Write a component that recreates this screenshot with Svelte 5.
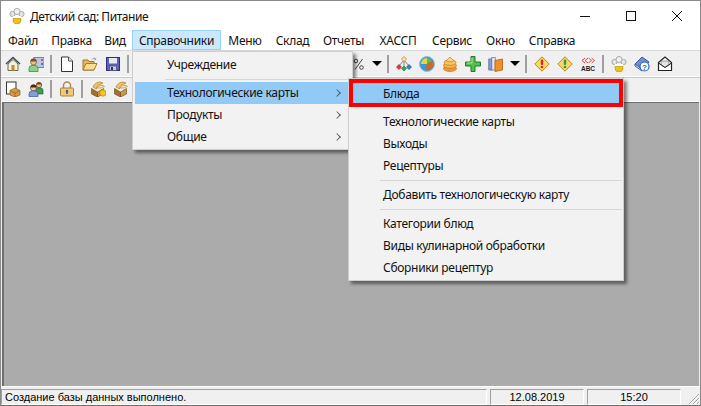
<script>
	const menus = [
		{ label: 'Файл', w: 44 },
		{ label: 'Правка', w: 53 },
		{ label: 'Вид', w: 34 },
		{ label: 'Справочники', w: 89, open: true },
		{ label: 'Меню', w: 48 },
		{ label: 'Склад', w: 47 },
		{ label: 'Отчеты', w: 55 },
		{ label: 'ХАССП', w: 54 },
		{ label: 'Сервис', w: 54 },
		{ label: 'Окно', w: 43 },
		{ label: 'Справка', w: 60 }
	];

	const row1 = [
		'home', 'staff', '|', 'doc', 'folder', 'floppy', '|', 'gap', 'percent', 'arrow', '|',
		'tree', 'pie', 'coins', 'plus', 'books', 'arrow', '|', 'warnred', 'warngreen', 'abc', '|',
		'chef', 'help', 'mail'
	];
	const row2 = ['docbox', 'people', '|', 'lock', '|', 'boxkey', 'boxopen'];

	const sub = [
		['Технологические карты', 'Выходы', 'Рецептуры'],
		['Добавить технологическую карту'],
		['Категории блюд', 'Виды кулинарной обработки', 'Сборники рецептур']
	];
</script>

{#snippet chefIcon()}
	<circle cx="3.5" cy="6" r="2.6" fill="#e6e6e6" stroke="#a8a8a8" />
	<circle cx="12.5" cy="6" r="2.6" fill="#e6e6e6" stroke="#a8a8a8" />
	<circle cx="8" cy="3.5" r="3" fill="#f2f2f2" stroke="#a8a8a8" />
	<path d="M4 8h8v4a4 4 0 0 1-8 0z" fill="#fff" />
	<path d="M4 10.5h8V12a4 4 0 0 1-8 0z" fill="#f4c20d" stroke="#b98a00" stroke-width=".6" />
{/snippet}

{#snippet icon(name)}
	<svg width="16" height="16" viewBox="0 0 16 16">
		{#if name === 'home'}
			<path d="M1 8 8 1.5 15 8" fill="none" stroke="#3a4a5a" stroke-width="1.5" />
			<path d="M3 8 8 3.5 13 8v6.5H3z" fill="#f7f1dc" stroke="#6b6b55" />
			<rect x="6.5" y="9" width="3" height="5.5" fill="#c98a2b" />
		{:else if name === 'staff'}
			<rect x="6" y="1.5" width="10" height="10" fill="#b9c8dc" stroke="#6f86a5" />
			<rect x="13" y="3" width="2" height="2" fill="#d44a9c" />
			<rect x="13" y="7" width="2" height="2" fill="#3e7fc4" />
			<circle cx="5.5" cy="6" r="3" fill="#eec08e" stroke="#7a5a2a" stroke-width=".7" />
			<path d="M2.5 5.5a3 3 0 0 1 6 0z" fill="#7a5020" />
			<path d="M1 15.5v-3a3 3 0 0 1 3-3h3a3 3 0 0 1 3 3v3z" fill="#8ed08a" stroke="#3f8a45" stroke-width=".8" />
		{:else if name === 'doc'}
			<path d="M2.5 1h7l4 4v10.5h-11z" fill="#fff" stroke="#333" />
			<path d="M9.5 1v4h4" fill="#dfe6f2" stroke="#555" />
		{:else if name === 'folder'}
			<path d="M1 14V4h5l1 1.5h5V14z" fill="#e8b95c" stroke="#9a7424" />
			<path d="M1 14l3-6.5h11L12 14z" fill="#fbdc92" stroke="#a67c28" />
			<path d="M10 3.5c1-1.5 2.5-1.5 3.5-.5" fill="none" stroke="#8a9bb0" />
			<path d="M12.5 1.5l2 1.5-2 1.5z" fill="#8a9bb0" />
		{:else if name === 'floppy'}
			<rect x="1.5" y="1.5" width="13" height="13" fill="#5f62b8" stroke="#2f3178" />
			<rect x="4" y="2" width="8" height="5.5" fill="#e6e8f4" />
			<rect x="4.5" y="10" width="7" height="4.5" fill="#c8cbd8" stroke="#3a3a6a" stroke-width=".6" />
			<rect x="6" y="11" width="2" height="3" fill="#333" />
		{:else if name === 'percent'}
			<path d="M12.5 3 5 13.5" stroke="#444" fill="none" />
			<circle cx="6" cy="5" r="1.8" fill="none" stroke="#444" />
			<circle cx="11.5" cy="11.5" r="1.8" fill="none" stroke="#444" />
		{:else if name === 'tree'}
			<path d="M8 4 3 10M8 4v6M8 4l5 6" stroke="#666" fill="none" stroke-width=".8" />
			<path d="M8 .5 10.5 3 8 5.5 5.5 3z" fill="#f7e3b0" stroke="#d9822b" stroke-width=".8" />
			<path d="M3 8.5 5.5 11 3 13.5.5 11z" fill="#e5383b" stroke="#8f1a1a" stroke-width=".6" />
			<path d="M8 10 10.5 12.5 8 15 5.500 12.5z" fill="#33a852" stroke="#1b6e30" stroke-width=".6" />
			<path d="M13 8.500 15.500 11 13 13.500 10.500 11z" fill="#2f7fd1" stroke="#174f8f" stroke-width=".6" />
		{:else if name === 'pie'}
			<circle cx="8" cy="8" r="7.500" fill="#3e96d2" stroke="#8cc4e6" />
			<path d="M8 8V2a6 6 0 0 0-6 6z" fill="#e6d63a" />
			<path d="M8 8V2a6 6 0 0 1 5.200 3z" fill="#5cb85c" />
			<path d="M8 8l5.200-3A6 6 0 0 1 13 12z" fill="#d8651f" />
			<path d="M8 8l5 4a6 6 0 0 1-6 2z" fill="#d8651f" />
		{:else if name === 'coins'}
			<ellipse cx="8" cy="12.500" rx="6.500" ry="3" fill="#ec9a3a" stroke="#c46f12" stroke-width=".7" />
			<ellipse cx="8" cy="9.500" rx="6.500" ry="3" fill="#f4b04d" stroke="#c46f12" stroke-width=".7" />
			<ellipse cx="8" cy="6.500" rx="6" ry="2.800" fill="#f8c468" stroke="#c97a18" stroke-width=".7" />
			<path d="M8 1 12 5a5 2 0 0 1-8 0z" fill="#fbd58a" stroke="#c97a18" stroke-width=".7" />
		{:else if name === 'plus'}
			<path d="M6 .500h4v5.500h5.500v4H10v5.500H6V10H.500V6H6z" fill="#56c04d" stroke="#1f7a2a" />
			<path d="M7 2v5H2" fill="none" stroke="#a8e8a0" />
		{:else if name === 'books'}
			<rect x=".8" y="3" width="3.400" height="11" fill="#7f9fd8" stroke="#4a5f96" stroke-width=".7" />
			<rect x="3.800" y="1.500" width="3.400" height="12.500" fill="#e8e4f0" stroke="#6a6a8a" stroke-width=".7" />
			<path d="M7 4.500 14.500 3v11L7 15.500z" fill="#f08f2e" stroke="#b05f0c" stroke-width=".8" />
		{:else if name === 'warnred' || name === 'warngreen'}
			<path d="M8 .8 15.200 8 8 15.200.8 8z" fill="#fbd66b" stroke="#b88a1c" />
			<rect x="6.800" y="3.500" width="2.400" height="5.500" rx="1" fill={name === 'warnred' ? '#d62d20' : '#2f9e3f'} />
			<circle cx="8" cy="11" r="1.300" fill={name === 'warnred' ? '#d62d20' : '#2f9e3f'} />
		{:else if name === 'abc'}
			<path d="M5 2 2 4.500 5 7M8 2 5 4.500 8 7M8.500 2l3 2.500-3 2.500M11.500 2l3 2.500-3 2.500" fill="none" stroke="#e2312d" stroke-width=".9" />
			<text x="8" y="14.500" text-anchor="middle" class="abc">ABC</text>
		{:else if name === 'chef'}
			{@render chefIcon()}
		{:else if name === 'help'}
			<path d="M1 8 8 1l7 5-6 8z" fill="#6f8fd0" stroke="#3f5a9a" />
			<path d="M1 8v2l7 5" fill="none" stroke="#3f5a9a" />
			<circle cx="10.500" cy="10.500" r="4.500" fill="#fff" stroke="#2f62b8" stroke-width="1.200" />
			<text x="10.500" y="13.500" text-anchor="middle" class="q">?</text>
		{:else if name === 'mail'}
			<path d="M1.500 6.500 8 1l6.500 5.500v8h-13z" fill="#fff" stroke="#222" stroke-width="1.200" />
			<path d="M4 5h8v4L8 11.500 4 9z" fill="#e4e4e4" stroke="#777" stroke-width=".7" />
			<path d="M1.500 7 8 11.500 14.500 7" fill="none" stroke="#222" />
		{:else if name === 'docbox'}
			<rect x="1.500" y="1" width="9.500" height="12" fill="#fff" stroke="#333" />
			<path d="M5 9.500 10 7l5 2.500v4.500l-5 2-5-2z" fill="#d69a45" stroke="#8c5e1c" stroke-width=".7" />
			<path d="M5 9.500 10 12l5-2.500M10 12v4" fill="none" stroke="#8c5e1c" stroke-width=".7" />
		{:else if name === 'people'}
			<circle cx="11" cy="4" r="2.700" fill="#eec08e" stroke="#6b4420" stroke-width=".8" />
			<path d="M8.500 3.500a2.700 2.700 0 0 1 5 0z" fill="#6b3a12" />
			<path d="M7.500 13V9.500a2.500 2.500 0 0 1 2.500-2.500h2.500a2.500 2.500 0 0 1 2.500 2.500V13z" fill="#3f9a55" stroke="#1f6a35" stroke-width=".7" />
			<circle cx="5.500" cy="7" r="3" fill="#f3cba0" stroke="#6b4420" stroke-width=".8" />
			<path d="M2.500 6.500a3 3 0 0 1 6 0z" fill="#4a2a10" />
			<path d="M1 15.500v-2.500a3 3 0 0 1 3-3h3a3 3 0 0 1 3 3v2.500z" fill="#7f9fe0" stroke="#3f5a9a" stroke-width=".7" />
		{:else if name === 'lock'}
			<path d="M4.500 7V4.500a3.500 3.500 0 0 1 7 0V7" fill="none" stroke="#a88a5a" stroke-width="1.500" />
			<rect x="1.500" y="7" width="13" height="8" rx="1" fill="#f2c879" stroke="#a8813a" />
			<path d="M8 8.500l1.500 2H8.700V13H7.300v-2.500H6.500z" fill="#24408a" />
		{:else if name === 'boxkey' || name === 'boxopen'}
			<path d="M1.500 7.500 7.500 11v5L1.500 13z" fill="#a86f28" stroke="#6f4510" stroke-width=".6" />
			<path d="M7.500 11l6-3.500V13l-6 3z" fill="#d0954a" stroke="#6f4510" stroke-width=".6" />
			<path d="M3 6c1-3 4-5 7-5l3 1-3 1.500c-1.500 0-3 1-3.500 4.500z" fill="#f4c465" stroke="#a06e14" stroke-width=".6" />
			<path d="M7 7c1-2 3-3 6-2.500l1.500 1L11 7z" fill="#fbe3a3" stroke="#a06e14" stroke-width=".5" />
			{#if name === 'boxkey'}
				<circle cx="13" cy="12" r="3.200" fill="#f6c520" stroke="#b98a00" stroke-width=".7" />
			{/if}
		{/if}
	</svg>
{/snippet}

{#snippet toolbar(items)}
	{#each items as item}
		{#if item === '|'}
			<span class="sep"></span>
		{:else if item === 'gap'}
			<span class="gap"></span>
		{:else if item === 'arrow'}
			<span class="arrow"></span>
		{:else}
			<span class="tool">{@render icon(item)}</span>
		{/if}
	{/each}
{/snippet}

<div class="window">
	<header class="titlebar">
		<svg class="appicon" width="16" height="16" viewBox="0 0 16 16">{@render chefIcon()}</svg>
		<span class="title">Детский сад: Питание</span>
		<div class="controls">
			<span class="ctl"><svg width="10" height="10" viewBox="0 0 10 10"><path d="M0 5.500h10" stroke="#111" /></svg></span>
			<span class="ctl"><svg width="10" height="10" viewBox="0 0 10 10"><rect x=".5" y=".5" width="9" height="9" fill="none" stroke="#111" /></svg></span>
			<span class="ctl"><svg width="10" height="10" viewBox="0 0 10 10"><path d="M0 0l10 10M10 0 0 10" stroke="#111" /></svg></span>
		</div>
	</header>

	<nav class="menubar">
		{#each menus as m}
			<span class="top" class:open={m.open} style="width: {m.w}px">{m.label}</span>
		{/each}
	</nav>

	<div class="toolrow first">{@render toolbar(row1)}</div>
	<div class="toolrow">{@render toolbar(row2)}</div>

	<main class="client"></main>

	<footer class="status">
		<span class="panel msg">Создание базы данных выполнено.</span>
		<span class="panel date">12.08.2019</span>
		<span class="panel time">15:20</span>
		<svg class="grip" width="14" height="14" viewBox="0 0 14 14">
			<path d="M13 3 3 13M13 7 7 13M13 11l-2 2" stroke="#a0a0a0" fill="none" />
			<path d="M13 4 4 13M13 8l-5 5M13 12l-1 1" stroke="#fff" fill="none" />
		</svg>
	</footer>

	<div class="menu first-menu">
		<div class="item">Учреждение</div>
		<div class="divider"></div>
		<div class="item active">Технологические карты<span class="chev"></span></div>
		<div class="item">Продукты<span class="chev"></span></div>
		<div class="item">Общие<span class="chev"></span></div>
	</div>

	<div class="menu second-menu">
		<div class="item active marked">Блюда</div>
		{#each sub as group}
			<div class="divider"></div>
			{#each group as label}
				<div class="item">{label}</div>
			{/each}
		{/each}
	</div>
</div>

<style>
	:global(body) {
		margin: 0;
		background: #fff;
	}

	.window {
		position: relative;
		box-sizing: border-box;
		width: 701px;
		height: 406px;
		border: 1px solid #8a8a8a;
		border-bottom-color: #6f6f6f;
		display: flex;
		flex-direction: column;
		background: #f0f0f0;
		overflow: hidden;
		font-family: "Noto Sans", "Open Sans", sans-serif;
		font-size: 12px;
		color: #111;
	}

	.titlebar {
		height: 29px;
		flex: none;
		display: flex;
		align-items: center;
		background: #fff;
		padding-left: 8px;
	}

	.appicon {
		margin-right: 5px;
		margin-top: 1px;
	}

	.title {
		margin-top: 1px;
		letter-spacing: -0.45px;
	}

	.controls {
		margin-left: auto;
		display: flex;
	}

	.ctl {
		width: 46px;
		height: 29px;
		display: flex;
		align-items: center;
		justify-content: center;
	}

	.menubar {
		height: 20px;
		flex: none;
		display: flex;
		background: #fff;
		border-bottom: 1px solid #d9d9d9;
	}

	.top {
		line-height: 21px;
		letter-spacing: -0.3px;
		box-sizing: border-box;
		height: 20px;
		text-align: center;
		white-space: nowrap;
		flex: none;
	}

	.top.open {
		background: #cce8ff;
		outline: 1px solid #99d1ff;
		outline-offset: -1px;
	}

	.toolrow {
		height: 24px;
		flex: none;
		display: flex;
		align-items: center;
		padding-left: 0;
		border-bottom: 1px solid #fff;
		box-shadow: 0 1px 0 #c8c8c8 inset;
	}

	.toolrow.first {
		height: 25px;
		box-shadow: none;
	}

	.tool {
		width: 23px;
		height: 22px;
		flex: none;
		display: flex;
		align-items: center;
		justify-content: center;
	}

	.sep {
		width: 8px;
		height: 18px;
		flex: none;
		display: flex;
		justify-content: center;
		background: linear-gradient(#a0a0a0, #a0a0a0) center / 2px 18px no-repeat;
	}

	.gap {
		width: 214px;
		flex: none;
	}

	.arrow {
		width: 15px;
		flex: none;
		display: flex;
		justify-content: center;
	}

	.arrow::before {
		content: "";
		border-left: 5px solid transparent;
		border-right: 5px solid transparent;
		border-top: 5px solid #000;
	}

	.client {
		flex: 1;
		background: #ababab;
		border-top: 1px solid #6d6d6d;
		border-left: 2px solid #6d6d6d;
		margin-left: 1px;
		margin-right: 1px;
	}

	.status {
		height: 19px;
		flex: none;
		display: flex;
		align-items: stretch;
		gap: 3px;
		padding-top: 2px;
		box-sizing: border-box;
		border-top: 1px solid #fff;
		font-family: "Liberation Sans", Arial, sans-serif;
		font-size: 11px;
		color: #000;
	}

	.panel {
		box-sizing: border-box;
		border: 1px solid;
		border-color: #a0a0a0 #fff #fff #a0a0a0;
		line-height: 14px;
		white-space: nowrap;
	}

	.msg {
		width: 486px;
		padding-left: 3px;
	}

	.date,
	.time {
		width: 94px;
		text-align: center;
	}

	.grip {
		margin-left: auto;
		align-self: flex-end;
	}

	.abc {
		font: bold 6.500px "Liberation Sans", sans-serif;
		fill: #222;
	}

	.q {
		font: bold 8px "Liberation Sans", sans-serif;
		fill: #2f62b8;
	}

	.menu {
		position: absolute;
		box-sizing: border-box;
		background: #f2f2f2;
		border: 1px solid #cfcfcf;
		padding: 2px;
		box-shadow: 3px 3px 3px rgba(0, 0, 0, 0.45);
	}

	.first-menu {
		left: 131px;
		top: 50px;
		width: 221px;
		height: 99px;
	}

	.second-menu {
		left: 347px;
		top: 77px;
		width: 276px;
		height: 203px;
		padding: 2px 1px;
	}

	.item {
		position: relative;
		height: 22px;
		line-height: 21px;
		padding-left: 32px;
		letter-spacing: -0.3px;
		white-space: nowrap;
	}

	.active {
		background: #91c9f7;
	}

	.marked {
		margin: -2px -1px 0;
		height: 28px;
		line-height: 22px;
		padding-left: 30px;
		border: 4px solid #ff0000;
		box-sizing: border-box;
	}

	.second-menu .item:not(.marked) {
		padding-left: 33px;
	}

	.divider {
		height: 7px;
		margin-left: 30px;
		background: linear-gradient(#d7d7d7, #d7d7d7) center / 100% 1px no-repeat;
	}

	.marked + .divider {
		height: 4px;
		background: none;
	}

	.first-menu .divider {
		height: 6px;
	}

	.chev {
		position: absolute;
		right: 10px;
		top: 8px;
		width: 5px;
		height: 5px;
		border-top: 1px solid #555;
		border-right: 1px solid #555;
		transform: rotate(45deg) scale(0.9);
	}
</style>
